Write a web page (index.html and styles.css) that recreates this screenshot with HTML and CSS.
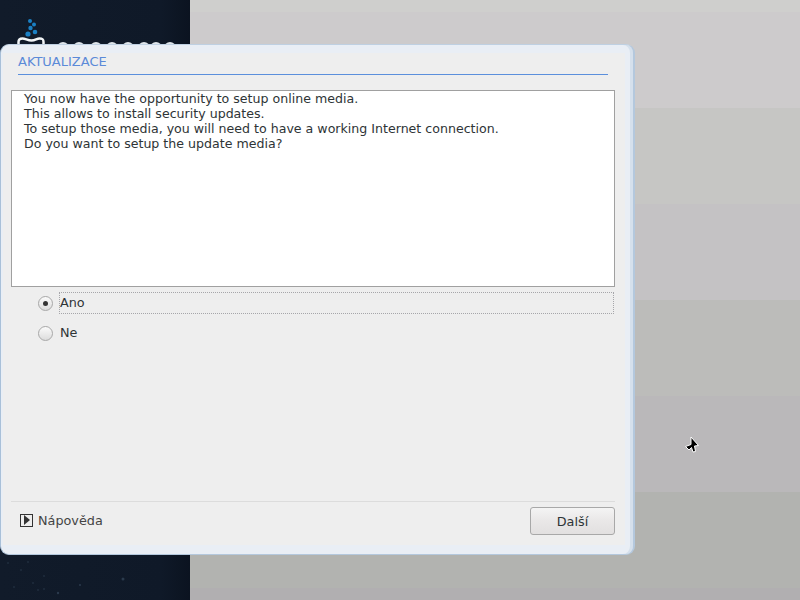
FILE: index.html
```html
<!DOCTYPE html>
<html lang="cs">
<head>
<meta charset="utf-8">
<title>Aktualizace</title>
<link rel="stylesheet" href="styles.css">
</head>
<body>
<div class="desktop">
  <aside class="side">
    <svg class="stars" width="190" height="600" viewBox="0 0 190 600">
      <g fill="#2a3a4c">
        <circle cx="21" cy="570" r=".8"/><circle cx="28" cy="562" r=".8"/><circle cx="44" cy="576" r=".8"/><circle cx="14" cy="587" r=".8"/><circle cx="58" cy="593" r="1.200"/><circle cx="123" cy="579" r="1.500"/><circle cx="38" cy="590" r=".8"/><circle cx="8" cy="563" r=".8"/><circle cx="80" cy="585" r="1"/><circle cx="33" cy="583" r=".8"/><circle cx="44" cy="589" r=".8"/>
      </g>
    </svg>
    <svg class="logo" width="190" height="44" viewBox="0 0 190 44">
      <g fill="#1b80c4">
        <circle cx="30" cy="21" r="2"/><circle cx="34" cy="24.500" r="2"/><circle cx="30.500" cy="28" r="2.200"/><circle cx="35" cy="32" r="2.300"/><circle cx="28" cy="34" r="2.600"/>
      </g>
      <path d="M18.500 45v-3c0-3 1.500-3.500 4-3.500 3 0 5 2 9 2 4 0 5-2 8-2 3 0 4 .5 4 3.500v3" fill="none" stroke="#f2f5f7" stroke-width="2.500"/>
      <g fill="none" stroke="#dfe5ea" stroke-width="2">
        <circle cx="63" cy="48" r="5"/><circle cx="79" cy="48" r="5"/><circle cx="96" cy="48" r="5"/><circle cx="112" cy="48" r="5"/><circle cx="128" cy="48" r="5"/><circle cx="144" cy="48" r="5"/><circle cx="156" cy="48" r="5"/><circle cx="170" cy="48" r="5"/>
      </g>
    </svg>
  </aside>
  <main class="bands">
    <div class="band band-0"></div>
    <div class="band band-1"></div>
    <div class="band band-2"></div>
    <div class="band band-3"></div>
    <div class="band band-4"></div>
    <div class="band band-5"></div>
    <div class="band band-6"></div>
    <div class="band band-7"></div>
  </main>
  <section class="window">
    <div class="window-inner">
      <header class="title-wrap">
        <h1 class="title">AKTUALIZACE</h1>
      </header>
      <div class="message">
        <p>You now have the opportunity to setup online media.</p>
        <p>This allows to install security updates.</p>
        <p>To setup those media, you will need to have a working Internet connection.</p>
        <p>Do you want to setup the update media?</p>
      </div>
      <div class="options">
        <div class="option">
          <span class="radio radio-on"><span class="dot"></span></span>
          <span class="label label-focus">Ano</span>
        </div>
        <div class="option">
          <span class="radio"></span>
          <span class="label">Ne</span>
        </div>
      </div>
      <footer class="footer">
        <div class="help">
          <span class="expander"><svg width="8" height="10" viewBox="0 0 8 10"><path d="M1 0l6 5-6 5z" fill="#333"/></svg></span>
          <span>Nápověda</span>
        </div>
        <button class="next" type="button">Další</button>
      </footer>
    </div>
  </section>
  <svg class="cursor" width="16" height="20" viewBox="0 0 16 20">
    <path d="M7 2l7.500 8.500-4 .5 1 5.500-2.500.5-1.500-4.500-2.500 2.500-3.500-3.500 5.500-2z" fill="#000" stroke="#fff" stroke-width="1"/>
  </svg>
</div>
</body>
</html>
```
FILE: styles.css
```css
* { box-sizing: border-box; }
html, body { margin: 0; padding: 0; }
body { font-family: "DejaVu Sans", sans-serif; font-size: 12.8px; color: #2e3436; }
.desktop { position: relative; width: 800px; height: 600px; overflow: hidden; display: flex; }
.side { position: relative; width: 190px; height: 600px; background: #101a29; background-image: linear-gradient(90deg, #111b2a 0, #0f1928 85%, #0b1320 100%); }
.stars { position: absolute; left: 0; top: 0; }
.logo { position: absolute; left: 0; top: 0; }
.bands { flex: 1; display: flex; flex-direction: column; }
.band { height: 96px; }
.band-0 { height: 12px; background: #cfcfcd; }
.band-1 { background: #cdcbcc; }
.band-2 { background: #c6c6c4; }
.band-3 { background: #c4c2c4; }
.band-4 { background: #bcbcba; }
.band-5 { background: #bab8ba; }
.band-6 { background: #b2b3b0; }
.band-7 { height: 12px; background: #b1afb1; }
.window { position: absolute; left: 0; top: 44px; width: 635px; height: 511px; border-radius: 9px; padding: 8px 8px 9px 2px; background: #e9eef5; border: 1px solid #bfd0e2; border-left-color: #a9c0d8; border-right: 2px solid #b4c8dd; border-bottom-color: #b4c8dd; box-shadow: inset -3px 0 0 #d5e0ec; }
.window-inner { width: 100%; height: 100%; background: #eeeeee; display: flex; flex-direction: column; padding: 0 0 0 8px; }
.title-wrap { width: 590px; height: 22px; margin-left: 7px; border-bottom: 1px solid #5b8fdc; }
.title { margin: 0; font-size: 13px; font-weight: 400; line-height: 16px; padding-top: 1px; color: #5b8ad8; }
.message { width: 604px; height: 197px; margin-top: 15px; background: #fff; border: 1px solid #a0a0a0; padding: 0 12px; line-height: 15px; font-size: 12.6px; color: #2e3436; }
.message p { margin: 0; }
.options { width: 603px; display: flex; flex-direction: column; gap: 8px; margin-top: 5px; padding-left: 27px; flex: 1; }
.option { display: flex; align-items: center; gap: 6px; height: 22px; }
.radio { width: 15px; height: 15px; flex: none; border-radius: 50%; border: 1px solid #a8a8a8; background: linear-gradient(#fbfbfb, #dcdcdc); display: flex; align-items: center; justify-content: center; }
.dot { width: 5px; height: 5px; border-radius: 50%; background: #333; }
.label { flex: 1; height: 22px; line-height: 20px; border: 1px dotted transparent; }
.label-focus { border-color: #a6a6aa; }
.footer { width: 604px; height: 44px; flex: none; border-top: 1px solid #dcdcdc; display: flex; justify-content: space-between; padding: 5px 0 0 9px; }
.help { display: flex; align-items: center; gap: 5px; height: 26px; color: #444; }
.expander { width: 13px; height: 13px; border: 1px solid #333; display: flex; align-items: center; justify-content: center; background: #eee; }
.next { width: 85px; height: 28px; font: inherit; color: #2e3436; border: 1px solid #a8a8a8; border-radius: 3px; background: linear-gradient(#f4f4f4, #e9e7e7 50%, #e2e0e0); padding: 0; }
.cursor { position: absolute; left: 684px; top: 435px; }
```
